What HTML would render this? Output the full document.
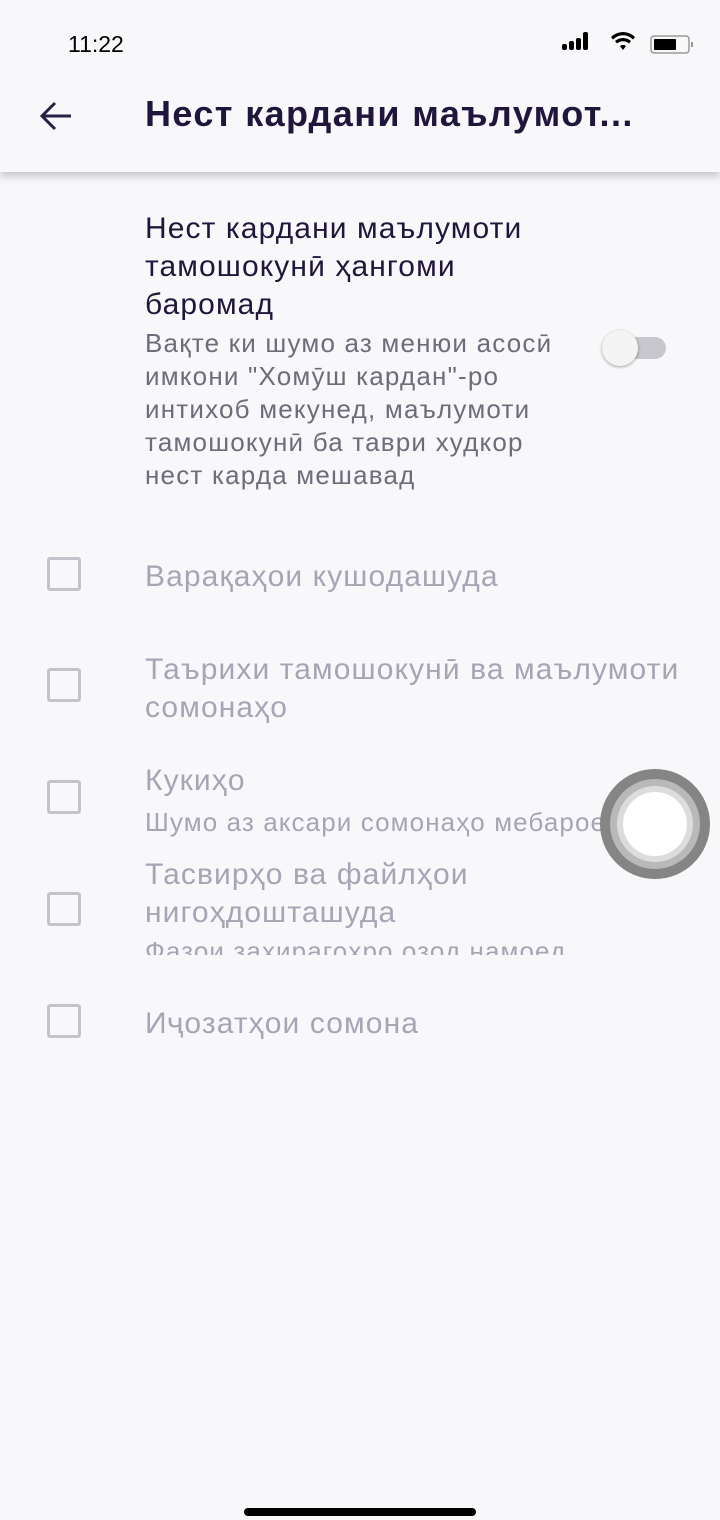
<!DOCTYPE html>
<html><head><meta charset="utf-8"><style>
*{margin:0;padding:0;box-sizing:border-box}
body{width:720px;height:1520px;background:#f8f8fb;font-family:"Liberation Sans","DejaVu Sans",sans-serif;position:relative;overflow:hidden}
.abs{position:absolute;white-space:nowrap}
.time{left:68px;top:31px;font-size:23px;color:#000}
.appbar{position:absolute;left:0;top:0;width:720px;height:172px;background:#f8f8fb;box-shadow:0 4px 8px rgba(0,0,0,.22)}
.title{left:145px;top:93px;font-size:36px;font-weight:bold;color:#20153a;letter-spacing:1.4px}
.h{font-size:30px;color:#20153a;line-height:38px;left:145px;top:210px;letter-spacing:1.1px}
.d{font-size:26px;color:#6f6b78;line-height:33px;left:145px;top:327px;letter-spacing:1.2px}
.cb{position:absolute;left:47px;width:34px;height:34px;border:3px solid #c5c3cc;border-radius:3px}
.g{font-size:30px;color:#a7a4b3;left:145px;line-height:38px;letter-spacing:1.1px}
.gs{font-size:26px;color:#a7a4b3;left:145px;letter-spacing:1.1px}
</style></head><body>
<div class="appbar"></div>
<div class="abs time">11:22</div>
<svg class="abs" style="left:560px;top:30px" width="140" height="26" viewBox="0 0 140 26">
<g fill="#000"><rect x="2" y="14" width="5" height="6" rx="2"/><rect x="9" y="11" width="5" height="9" rx="2"/><rect x="16" y="8" width="5" height="12" rx="2"/><rect x="23" y="2" width="5" height="18" rx="2"/></g>
<path d="M63 20 l-3-4 a5 5 0 0 1 6 0z M55 11 a12 12 0 0 1 16 0 l-2 2.5 a9 9 0 0 0-12 0z M51 7 a17 17 0 0 1 24 0 l-2 2.5 a14 14 0 0 0-20 0z" fill="#000"/>
<rect x="91" y="6" width="38" height="17" rx="3" fill="none" stroke="#999" stroke-width="1.5"/><rect x="94" y="9" width="22" height="11" rx="1" fill="#000"/><rect x="131" y="12" width="2" height="5" fill="#999"/>
</svg>
<svg class="abs" style="left:38px;top:98px" width="36" height="36" viewBox="0 0 36 36"><path d="M33 18H5M17 5L4 18l13 13" fill="none" stroke="#2a1f45" stroke-width="3"/></svg>
<div class="abs title">Нест кардани маълумот...</div>
<div class="abs h">Нест кардани маълумоти<br>тамошокунӣ ҳангоми<br>баромад</div>
<div class="abs d">Вақте ки шумо аз менюи асосӣ<br>имкони "Хомӯш кардан"-ро<br>интихоб мекунед, маълумоти<br>тамошокунӣ ба таври худкор<br>нест карда мешавад</div>
<div style="position:absolute;left:610px;top:337px;width:56px;height:22px;border-radius:11px;background:#c9c7ce"></div>
<div style="position:absolute;left:602px;top:330px;width:36px;height:36px;border-radius:50%;background:#f4f4f4;box-shadow:0 1px 3px rgba(0,0,0,.35)"></div>

<div class="cb" style="top:557px"></div>
<div class="abs g" style="top:558px">Варақаҳои кушодашуда</div>
<div class="cb" style="top:668px"></div>
<div class="abs g" style="top:651px">Таърихи тамошокунӣ ва маълумоти<br>сомонаҳо</div>
<div class="cb" style="top:780px"></div>
<div class="abs g" style="top:762px">Кукиҳо</div>
<div class="abs gs" style="top:807px">Шумо аз аксари сомонаҳо мебароед</div>
<div class="cb" style="top:892px"></div>
<div style="position:absolute;left:145px;top:856px;height:99px;overflow:hidden;width:560px">
<div class="g" style="position:absolute;left:0;top:0;white-space:nowrap">Тасвирҳо ва файлҳои<br>нигоҳдошташуда</div>
<div class="gs" style="position:absolute;left:0;top:80px;white-space:nowrap">Фазои захирагоҳро озод намоед</div></div>
<div class="cb" style="top:1004px"></div>
<div class="abs g" style="top:1005px">Иҷозатҳои сомона</div>

<div style="position:absolute;left:600px;top:769px;width:110px;height:110px;border-radius:50%;background:#858585"></div>
<div style="position:absolute;left:610px;top:779px;width:90px;height:90px;border-radius:50%;background:#b9b9b9"></div>
<div style="position:absolute;left:617px;top:786px;width:76px;height:76px;border-radius:50%;background:#dcdcdc"></div>
<div style="position:absolute;left:623px;top:792px;width:64px;height:64px;border-radius:50%;background:#fff"></div>

<div style="position:absolute;left:244px;top:1508px;width:232px;height:8px;border-radius:4px;background:#000"></div>
</body></html>
